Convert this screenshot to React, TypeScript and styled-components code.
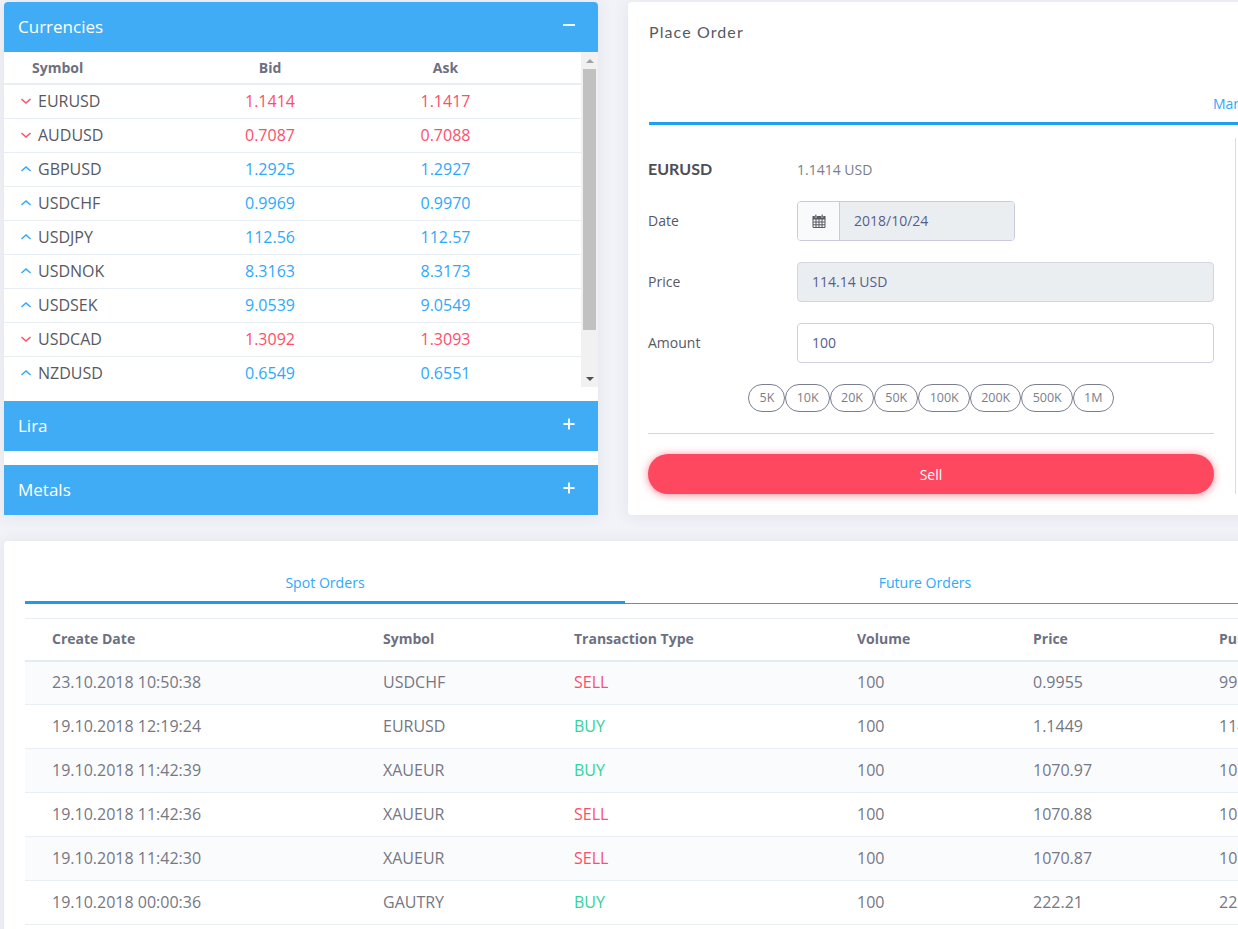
import React from 'react';
import styled, { createGlobalStyle } from 'styled-components';

const GlobalStyle = createGlobalStyle`
  html, body {
    margin: 0;
    padding: 0;
    height: 929px;
    overflow: hidden;
    background: #f2f3f8;
    font-family: 'Open Sans', 'Noto Sans', sans-serif;
    color: #575962;
  }
  * { box-sizing: border-box; }
`;

const Page = styled.div`
  width: 1238px;
  height: 929px;
  overflow: hidden;
  padding: 2px 0 0 4px;
`;

const TopRow = styled.div`
  display: flex;
  gap: 30px;
  width: 1300px;
`;

const MarketColumn = styled.div`
  width: 594px;
  height: 513px;
  flex: none;
  background: #fff;
  border-radius: 4px 4px 0 0;
  box-shadow: 0 1px 15px 1px rgba(69, 65, 78, 0.08);
`;

const PanelHeader = styled.div<{ $gap?: number }>`
  display: flex;
  align-items: center;
  justify-content: space-between;
  height: 50px;
  margin-top: ${({ $gap }) => $gap || 0}px;
  padding: 0 22px 2px 14px;
  background: #41acf6;
  color: #fff;
  font-size: 17px;
  font-weight: 500;
`;

const FirstHeader = styled(PanelHeader)`
  border-radius: 4px 4px 0 0;
`;

const ToggleIcon = styled.svg`
  display: block;
  width: 14px;
  height: 14px;
  margin-top: -2px;
`;

const QuoteBody = styled.div`
  display: flex;
  height: 335px;
`;

const QuoteTable = styled.div`
  width: 577px;
  flex: none;
`;

const QuoteRow = styled.div<{ $head?: boolean }>`
  display: grid;
  grid-template-columns: 178px 176px 175px 1fr;
  align-items: center;
  height: ${({ $head }) => ($head ? 33 : 34)}px;
  border-bottom: ${({ $head }) => ($head ? 2 : 1)}px solid #e8eef4;
  &:last-child {
    border-bottom-color: transparent;
  }
`;

const HeadCell = styled.div<{ $center?: boolean }>`
  padding-left: ${({ $center }) => ($center ? 0 : 28)}px;
  padding-bottom: 1px;
  text-align: ${({ $center }) => ($center ? 'center' : 'left')};
  font-size: 14px;
  font-weight: 700;
  color: #6d7080;
`;

const SymbolCell = styled.div`
  display: flex;
  align-items: center;
  gap: 6px;
  padding-left: 16px;
  padding-bottom: 1px;
  font-size: 16px;
  color: #575962;
`;

const Chevron = styled.svg`
  display: block;
  width: 12px;
  height: 8px;
  flex: none;
  margin-top: -1px;
`;

const PriceCell = styled.div<{ $up: boolean }>`
  text-align: center;
  padding-bottom: 1px;
  font-size: 16px;
  color: ${({ $up }) => ($up ? '#2ea9fa' : '#fc4f69')};
`;

const Scrollbar = styled.div`
  display: flex;
  flex-direction: column;
  align-items: center;
  width: 17px;
  flex: none;
  background: #f1f1f1;
`;

const ScrollButton = styled.div`
  display: flex;
  align-items: center;
  justify-content: center;
  width: 100%;
  height: 17px;
`;

const ScrollThumb = styled.div`
  width: 13px;
  height: 261px;
  background: #c1c1c1;
`;

const ScrollSpacer = styled.div`
  flex: 1;
`;

const ArrowUp = styled.div`
  border-left: 4px solid transparent;
  border-right: 4px solid transparent;
  border-bottom: 4px solid #a3a3a3;
`;

const ArrowDown = styled.div`
  border-left: 4px solid transparent;
  border-right: 4px solid transparent;
  border-top: 4px solid #505050;
`;

const OrderCard = styled.div`
  width: 660px;
  height: 513px;
  flex: none;
  padding: 0 0 0 21px;
  background: #fff;
  border-radius: 4px 0 0 4px;
  box-shadow: 0 1px 15px 1px rgba(69, 65, 78, 0.08);
`;

const OrderTitle = styled.h3`
  margin: 0;
  padding-top: 20px;
  height: 90px;
  font-family: Lato, 'Open Sans', sans-serif;
  font-size: 16px;
  line-height: 20px;
  font-weight: 400;
  letter-spacing: 1.1px;
  color: #575962;
`;

const OrderTabs = styled.div`
  height: 33px;
  padding: 2px 0 0 564px;
  border-bottom: 3px solid #1fa0f3;
  font-size: 14px;
  line-height: 20px;
  color: #2ea9fa;
`;

const OrderPane = styled.div`
  width: 588px;
  height: 356px;
  margin: 13px 0 0 -1px;
  padding-right: 22px;
  border-right: 1px solid #d9dbe6;
`;

const QuoteLine = styled.div`
  display: flex;
  align-items: center;
  height: 63px;
  padding-bottom: 1px;
`;

const FormLabel = styled.div`
  width: 149px;
  flex: none;
  padding-bottom: 1px;
  font-size: 14px;
  color: #575962;
`;

const SymbolLabel = styled(FormLabel)`
  font-family: Lato, 'Open Sans', sans-serif;
  font-size: 16px;
  font-weight: 700;
  color: #4b4d57;
`;

const QuoteValue = styled.div`
  font-size: 14px;
  color: #7b7e8a;
`;

const FormRow = styled.div`
  display: flex;
  align-items: center;
  height: 40px;
  margin-bottom: 21px;
`;

const DateGroup = styled.div`
  display: flex;
  width: 218px;
  height: 40px;
  border: 1px solid #c9cbdc;
  border-radius: 4px;
  overflow: hidden;
`;

const DateAddon = styled.div`
  display: flex;
  align-items: center;
  justify-content: center;
  width: 42px;
  flex: none;
  background: #f9fafc;
  border-right: 1px solid #c9cbdc;
`;

const CalendarIcon = styled.svg`
  display: block;
  width: 14px;
  height: 14px;
`;

const DateValue = styled.div`
  display: flex;
  align-items: center;
  flex: 1;
  padding-left: 14px;
  padding-bottom: 1px;
  background: #ebeef1;
  font-size: 14px;
  color: #575e8c;
`;

const FormInput = styled.div<{ $disabled?: boolean }>`
  display: flex;
  align-items: center;
  width: 417px;
  flex: none;
  height: 40px;
  padding-left: 14px;
  padding-bottom: 1px;
  border: 1px solid ${({ $disabled }) => ($disabled ? '#d3d5e2' : '#cfd1e0')};
  border-radius: 4px;
  background: ${({ $disabled }) => ($disabled ? '#ebeef1' : '#fff')};
  font-size: 14px;
  color: #575e8c;
`;

const ChipRow = styled.div`
  display: flex;
  justify-content: center;
  height: 28px;
  width: 566px;
`;

const Chip = styled.button`
  height: 28px;
  padding: 0 10.2px 1px;
  border: 1px solid #7b7e8f;
  border-radius: 14px;
  background: #fff;
  font-family: inherit;
  font-size: 12.5px;
  color: #7b7e8a;
`;

const Divider = styled.div`
  width: 566px;
  height: 1px;
  margin: 21px 0 20px;
  background: #d3d6e4;
`;

const SellButton = styled.button`
  display: block;
  width: 566px;
  height: 40px;
  padding-bottom: 1px;
  border: 0;
  border-radius: 20px;
  background: #fe4860;
  box-shadow: 0 1px 9px rgba(254, 72, 96, 0.65);
  color: #fff;
  font-family: inherit;
  font-size: 14px;
  font-weight: 500;
`;

const OrdersCard = styled.div`
  width: 1300px;
  height: 500px;
  margin-top: 26px;
  padding: 21px 0 0 21px;
  background: #fff;
  border-radius: 4px 0 0 0;
  box-shadow: 0 1px 15px 1px rgba(69, 65, 78, 0.08);
`;

const OrderTabBar = styled.div`
  display: flex;
  height: 42px;
  border-bottom: 1px solid #6b8fb0;
`;

const OrderTab = styled.div<{ $active?: boolean }>`
  width: 600px;
  height: 42px;
  text-align: center;
  font-size: 14.1px;
  line-height: 41px;
  color: #2ea9fa;
  border-bottom: ${({ $active }) => ($active ? '3px solid #1f9bec' : '0')};
`;

const OrdersTable = styled.table`
  width: 1279px;
  margin-top: 14px;
  border-collapse: collapse;
  table-layout: fixed;
  border-top: 1px solid #e8eef4;
`;

const HeadRow = styled.tr`
  height: 42px;
  border-bottom: 2px solid #e3ebf3;
`;

const Th = styled.th<{ $w: number }>`
  width: ${({ $w }) => $w}px;
  padding: 0 0 1px 27px;
  text-align: left;
  font-size: 14px;
  font-weight: 700;
  color: #6d7080;
  white-space: nowrap;
`;

const OrderRow = styled.tr`
  height: 44px;
  border-bottom: 1px solid #e8eef4;
  &:nth-child(odd) {
    background: #fafbfd;
  }
`;

const Td = styled.td`
  padding: 0 0 1px 27px;
  font-size: 16px;
  color: #757784;
  white-space: nowrap;
`;

const SideCell = styled(Td)<{ $buy: boolean }>`
  color: ${({ $buy }) => ($buy ? '#34d399' : '#fc4f69')};
`;

const quotes = [
  { symbol: 'EURUSD', bid: '1.1414', ask: '1.1417', up: false },
  { symbol: 'AUDUSD', bid: '0.7087', ask: '0.7088', up: false },
  { symbol: 'GBPUSD', bid: '1.2925', ask: '1.2927', up: true },
  { symbol: 'USDCHF', bid: '0.9969', ask: '0.9970', up: true },
  { symbol: 'USDJPY', bid: '112.56', ask: '112.57', up: true },
  { symbol: 'USDNOK', bid: '8.3163', ask: '8.3173', up: true },
  { symbol: 'USDSEK', bid: '9.0539', ask: '9.0549', up: true },
  { symbol: 'USDCAD', bid: '1.3092', ask: '1.3093', up: false },
  { symbol: 'NZDUSD', bid: '0.6549', ask: '0.6551', up: true },
];

const amounts = ['5K', '10K', '20K', '50K', '100K', '200K', '500K', '1M'];

const orders = [
  { date: '23.10.2018 10:50:38', symbol: 'USDCHF', side: 'SELL', volume: '100', price: '0.9955', total: '99.55' },
  { date: '19.10.2018 12:19:24', symbol: 'EURUSD', side: 'BUY', volume: '100', price: '1.1449', total: '114.49' },
  { date: '19.10.2018 11:42:39', symbol: 'XAUEUR', side: 'BUY', volume: '100', price: '1070.97', total: '107097' },
  { date: '19.10.2018 11:42:36', symbol: 'XAUEUR', side: 'SELL', volume: '100', price: '1070.88', total: '107088' },
  { date: '19.10.2018 11:42:30', symbol: 'XAUEUR', side: 'SELL', volume: '100', price: '1070.87', total: '107087' },
  { date: '19.10.2018 00:00:36', symbol: 'GAUTRY', side: 'BUY', volume: '100', price: '222.21', total: '22221' },
];

const Toggle = ({ open }: { open?: boolean }) => (
  <ToggleIcon viewBox="0 0 14 14">
    <path d={open ? 'M1 7h12' : 'M1.5 7h11M7 1.5v11'} stroke="#fff" strokeWidth="1.8" fill="none" />
  </ToggleIcon>
);

const Trend = ({ up }: { up: boolean }) => (
  <Chevron viewBox="0 0 12 8">
    <path
      d={up ? 'M1.5 6 6 2l4.5 4' : 'M1.5 2 6 6l4.5-4'}
      stroke={up ? '#2ea9fa' : '#fc4f69'}
      strokeWidth="1.5"
      fill="none"
    />
  </Chevron>
);

// filled header with two rings over an open grid of cells
const Calendar = () => (
  <CalendarIcon viewBox="0 0 14 14">
    <path d="M.5 2h13v3.5H.5z" fill="#575962" />
    <path d="M3 .5h1.6v3H3zM9.4.5H11v3H9.4z" fill="#575962" stroke="#f9fafc" strokeWidth=".4" />
    <path
      d="M1 5v8.5h12V5M1 8h12M1 10.8h12M4 5v8.5M7 5v8.5M10 5v8.5"
      stroke="#575962"
      strokeWidth="1"
      fill="none"
    />
  </CalendarIcon>
);

export default function App() {
  return (
    <>
      <GlobalStyle />
      <Page>
        <TopRow>
          <MarketColumn>
            <FirstHeader>
              Currencies
              <Toggle open />
            </FirstHeader>
            <QuoteBody>
              <QuoteTable>
                <QuoteRow $head>
                  <HeadCell>Symbol</HeadCell>
                  <HeadCell $center>Bid</HeadCell>
                  <HeadCell $center>Ask</HeadCell>
                </QuoteRow>
                {quotes.map((q) => (
                  <QuoteRow key={q.symbol}>
                    <SymbolCell>
                      <Trend up={q.up} />
                      {q.symbol}
                    </SymbolCell>
                    <PriceCell $up={q.up}>{q.bid}</PriceCell>
                    <PriceCell $up={q.up}>{q.ask}</PriceCell>
                  </QuoteRow>
                ))}
              </QuoteTable>
              <Scrollbar>
                <ScrollButton>
                  <ArrowUp />
                </ScrollButton>
                <ScrollThumb />
                <ScrollSpacer />
                <ScrollButton>
                  <ArrowDown />
                </ScrollButton>
              </Scrollbar>
            </QuoteBody>
            <PanelHeader $gap={14}>
              Lira
              <Toggle />
            </PanelHeader>
            <PanelHeader $gap={14}>
              Metals
              <Toggle />
            </PanelHeader>
          </MarketColumn>

          <OrderCard>
            <OrderTitle>Place Order</OrderTitle>
            <OrderTabs>Market</OrderTabs>
            <OrderPane>
              <QuoteLine>
                <SymbolLabel>EURUSD</SymbolLabel>
                <QuoteValue>1.1414 USD</QuoteValue>
              </QuoteLine>
              <FormRow>
                <FormLabel>Date</FormLabel>
                <DateGroup>
                  <DateAddon>
                    <Calendar />
                  </DateAddon>
                  <DateValue>2018/10/24</DateValue>
                </DateGroup>
              </FormRow>
              <FormRow>
                <FormLabel>Price</FormLabel>
                <FormInput $disabled>114.14 USD</FormInput>
              </FormRow>
              <FormRow>
                <FormLabel>Amount</FormLabel>
                <FormInput>100</FormInput>
              </FormRow>
              <ChipRow>
                {amounts.map((a) => (
                  <Chip key={a}>{a}</Chip>
                ))}
              </ChipRow>
              <Divider />
              <SellButton>Sell</SellButton>
            </OrderPane>
          </OrderCard>
        </TopRow>

        <OrdersCard>
          <OrderTabBar>
            <OrderTab $active>Spot Orders</OrderTab>
            <OrderTab>Future Orders</OrderTab>
          </OrderTabBar>
          <OrdersTable>
            <thead>
              <HeadRow>
                <Th $w={331}>Create Date</Th>
                <Th $w={191}>Symbol</Th>
                <Th $w={283}>Transaction Type</Th>
                <Th $w={176}>Volume</Th>
                <Th $w={186}>Price</Th>
                <Th $w={112}>Purchase Price</Th>
              </HeadRow>
            </thead>
            <tbody>
              {orders.map((o) => (
                <OrderRow key={o.date}>
                  <Td>{o.date}</Td>
                  <Td>{o.symbol}</Td>
                  <SideCell $buy={o.side === 'BUY'}>{o.side}</SideCell>
                  <Td>{o.volume}</Td>
                  <Td>{o.price}</Td>
                  <Td>{o.total}</Td>
                </OrderRow>
              ))}
            </tbody>
          </OrdersTable>
        </OrdersCard>
      </Page>
    </>
  );
}
